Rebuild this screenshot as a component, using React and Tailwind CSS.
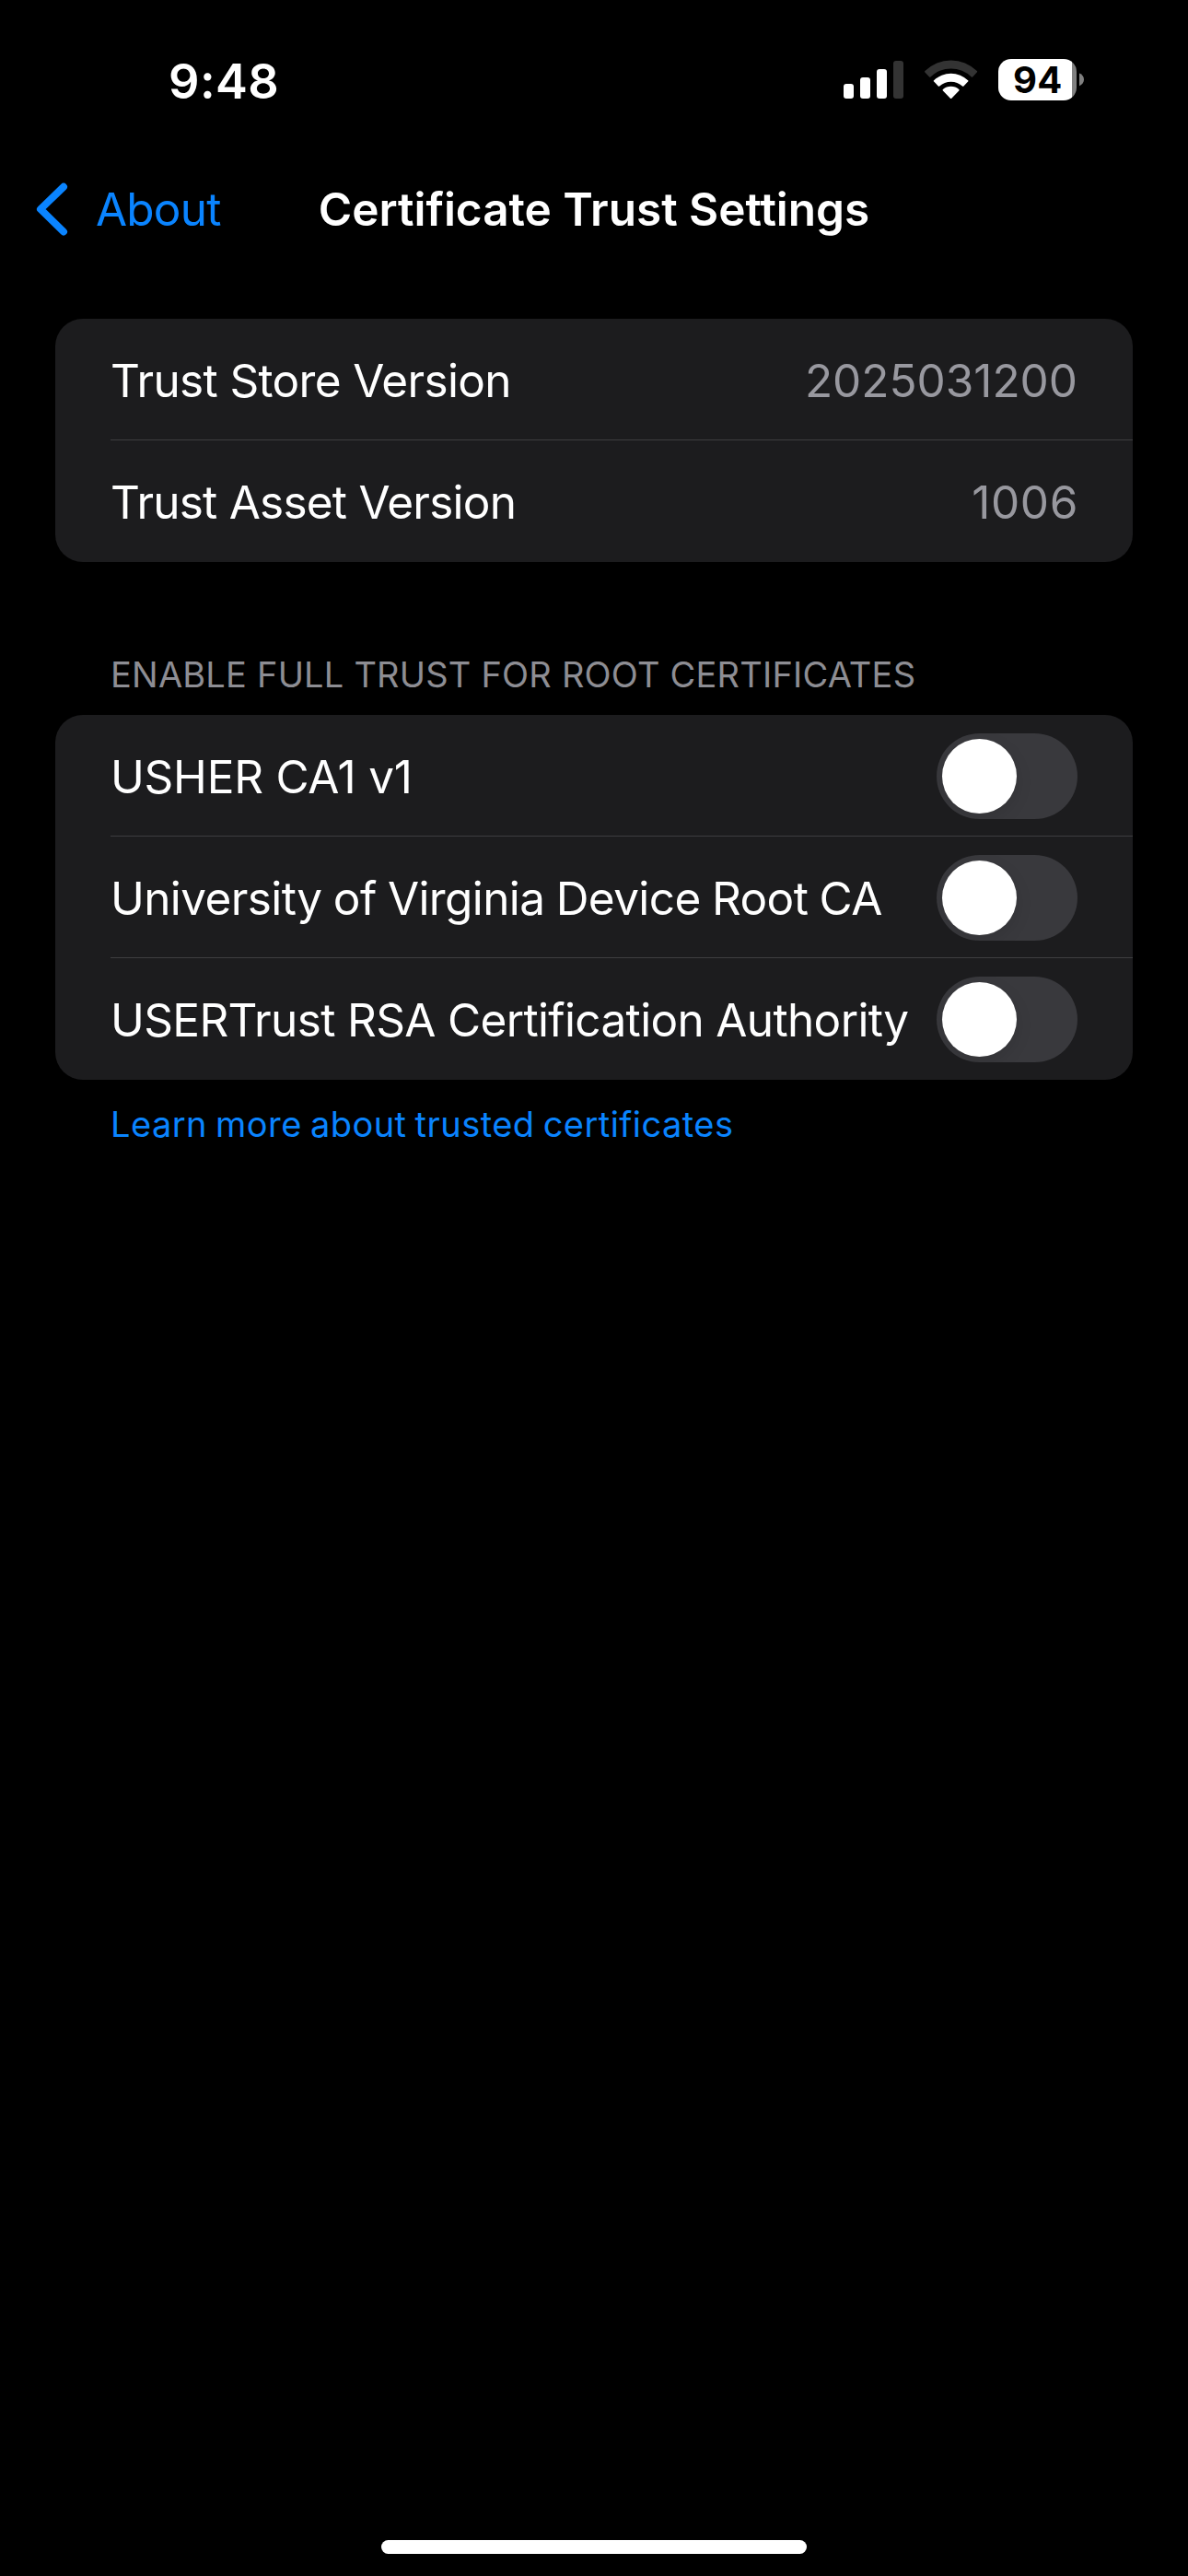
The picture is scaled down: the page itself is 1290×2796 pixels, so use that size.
const versions = [
  { label: "Trust Store Version", value: "2025031200", labelTracking: "tracking-[-0.647px]", valueTracking: "tracking-[-0.015px]" },
  { label: "Trust Asset Version", value: "1006", labelTracking: "tracking-[-0.772px]", valueTracking: "tracking-[0.6px] -mr-px" },
];

const certificates = [
  { label: "USHER CA1 v1", tracking: "tracking-[-0.25px]" },
  { label: "University of Virginia Device Root CA", tracking: "tracking-[-0.603px] [word-spacing:-1px]" },
  { label: "USERTrust RSA Certification Authority", tracking: "tracking-[-0.655px]" },
];

function SignalBars() {
  return (
    <svg width="65" height="45" viewBox="0 0 65 45" aria-hidden="true">
      <rect x="0" y="27" width="11" height="16" rx="3" fill="#fff" />
      <rect x="18" y="20" width="11" height="23" rx="3" fill="#fff" />
      <rect x="36" y="11" width="11" height="32" rx="3" fill="#fff" />
      <rect x="54" y="2" width="11" height="41" rx="3" fill="#333" />
    </svg>
  );
}

function Wifi() {
  return (
    <svg width="58" height="45" viewBox="0 0 58 45" aria-hidden="true">
      <path d="M0.4 13.1A39.8 39.8 0 0 1 56.8 13.1q0.7 0.7 0 1.4l-4.7 4.9q-0.6 0.6-1.3 0a32 32 0 0 0-44.4 0q-0.7 0.6-1.3 0L0.4 14.5q-0.7-0.7 0-1.4z" fill="#333" />
      <path d="M10.1 23.2a26.6 26.6 0 0 1 37 0q0.8 0.7 0 1.4l-4.7 4.8q-0.7 0.7-1.4 0a18.6 18.6 0 0 0-24.8 0q-0.7 0.7-1.4 0l-4.7-4.8q-0.8-0.7 0-1.4z" fill="#fff" />
      <path d="M19.9 33a13.4 13.4 0 0 1 17.4 0q0.8 0.7 0 1.5l-8 8.2q-0.7 0.7-1.4 0l-8-8.2q-0.8-0.8 0-1.5z" fill="#fff" />
    </svg>
  );
}

function Battery() {
  return (
    <div className="flex items-center">
      <div className="flex h-[45px] w-[85px] items-center rounded-[14px] bg-linear-to-r from-white from-[94.1%] to-[#808080] to-[94.1%] pl-[16px]">
        <span className="text-[40px] leading-[49px] font-bold tracking-[0.313px] text-black">94</span>
      </div>
      <svg className="ml-[3px]" width="5" height="15" viewBox="0 0 5 15" aria-hidden="true">
        <path d="M0 0.5C3 1.6 5 4.2 5 7.3S3 13.2 0 14.2z" fill="#808080" />
      </svg>
    </div>
  );
}

function StatusBar() {
  return (
    <div className="flex h-[158px] items-start justify-between pr-[113px] pl-[183px]">
      <span className="mt-[61px] text-[52.3px] leading-[54px] font-semibold tracking-[0.438px]">9:48</span>
      <div className="mt-[64px] flex items-center">
        <SignalBars />
        <div className="ml-[23px]">
          <Wifi />
        </div>
        <div className="ml-[22px]">
          <Battery />
        </div>
      </div>
    </div>
  );
}

function NavBar() {
  return (
    <header className="grid h-[138px] grid-cols-[1fr_auto_1fr] items-center">
      <button type="button" className="flex items-center pl-[39px] text-[#0a84ff]">
        <svg width="36" height="58" viewBox="0 0 36 58" fill="none" aria-hidden="true">
          <path d="M30 4.8L5 29l25 24.5" stroke="currentColor" strokeWidth="8" strokeLinecap="round" strokeLinejoin="round" />
        </svg>
        <span className="ml-[29px] text-[49.5px] leading-[60px] tracking-[-0.8px]">About</span>
      </button>
      <h1 className="text-[49.5px] leading-[60px] font-semibold tracking-[-0.02px]">Certificate Trust Settings</h1>
    </header>
  );
}

function Card({ children }) {
  return <div className="mx-[60px] overflow-hidden rounded-[30px] bg-[#1c1c1e]">{children}</div>;
}

function Row({ children, last }) {
  return (
    <div className="pl-[60px]">
      <div className={last ? "flex h-[132px] items-center justify-between pr-[60px]" : "flex h-[132px] items-center justify-between pr-[60px] shadow-[inset_0_-1px_0_#3d3d40]"}>
        {children}
      </div>
    </div>
  );
}

function Toggle() {
  return (
    <button type="button" role="switch" aria-checked="false" className="flex h-[93px] w-[153px] shrink-0 items-center overflow-hidden rounded-full bg-[#39393d] pl-[6px]">
      <span className="size-[81px] rounded-full bg-white shadow-[0_6px_18px_rgba(0,0,0,0.1)]" />
    </button>
  );
}

export default function App() {
  return (
    <div className="flex min-h-[2796px] w-[1290px] flex-col bg-black font-['Inter',sans-serif] whitespace-nowrap text-white">
      <StatusBar />
      <NavBar />

      <main className="pt-[50px]">
        <Card>
          {versions.map((v, i) => (
            <Row key={v.label} last={i === versions.length - 1}>
              <span className={`pt-[2px] text-[49.5px] leading-[60px] ${v.labelTracking}`}>{v.label}</span>
              <span className={`pt-[2px] text-[49.5px] leading-[60px] text-[#98989f] ${v.valueTracking}`}>{v.value}</span>
            </Row>
          ))}
        </Card>

        <h2 className="mt-[99px] mb-[21px] pl-[120px] text-[38px] leading-[46px] tracking-[0.204px] text-[#8d8d93]">
          ENABLE FULL TRUST FOR ROOT CERTIFICATES
        </h2>
        <Card>
          {certificates.map((c, i) => (
            <Row key={c.label} last={i === certificates.length - 1}>
              <span className={`pt-[2px] text-[49.5px] leading-[60px] ${c.tracking}`}>{c.label}</span>
              <Toggle />
            </Row>
          ))}
        </Card>
        <a href="#learn" className="mt-[25px] block pl-[120px] text-[38px] leading-[46px] tracking-[0.45px] [word-spacing:-2px] text-[#0a84ff]">
          Learn more about trusted certificates
        </a>
      </main>

      <div className="mx-auto mt-auto mb-[24px] h-[15px] w-[462px] rounded-full bg-white" />
    </div>
  );
}
